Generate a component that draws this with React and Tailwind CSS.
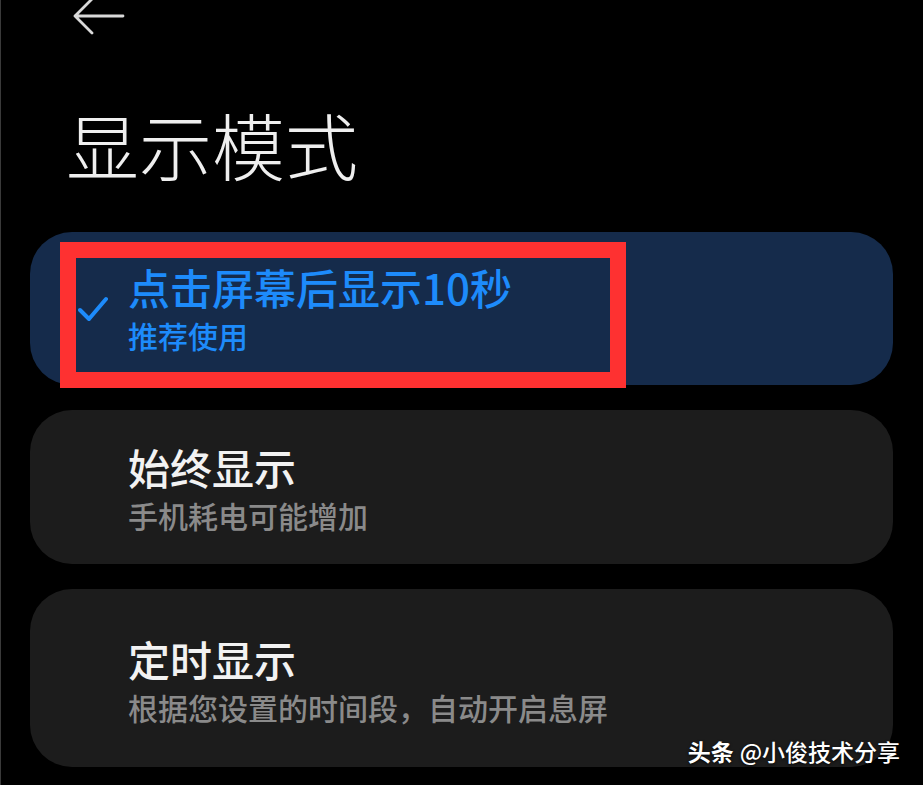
const options = [
  {
    title: "点击屏幕后显示10秒",
    desc: "推荐使用",
    selected: true,
  },
  {
    title: "始终显示",
    desc: "手机耗电可能增加",
  },
  {
    title: "定时显示",
    desc: "根据您设置的时间段，自动开启息屏",
    tall: true,
  },
];

const BackArrow = () => (
  <svg width="52" height="32" viewBox="0 0 52 32" fill="none" className="overflow-visible">
    <path
      d="M2 16 L50 16 M19 -1 L2 16 L19 33"
      stroke="#d9d9d9"
      strokeWidth="2.8"
      strokeLinecap="round"
      strokeLinejoin="round"
    />
  </svg>
);

const Check = () => (
  <svg width="30" height="26" viewBox="0 0 30 26" fill="none">
    <path
      d="M2 14 L11 23 L28 3"
      stroke="#1d8bfb"
      strokeWidth="4"
      strokeLinecap="round"
      strokeLinejoin="round"
    />
  </svg>
);

const OptionCard = ({ option }) => {
  if (option.selected) {
    return (
      <div className="relative flex h-[153px] items-center rounded-[42px] bg-[#152b4b] pl-[48px]">
        <Check />
        <div className="ml-[20px] -mt-[2px] flex flex-col">
          <span className="text-[42px] font-medium leading-[48px] text-[#1d8bfb]">
            {option.title}
          </span>
          <span className="mt-[6px] text-[30px] font-medium leading-[36px] text-[#1d8bfb]">
            {option.desc}
          </span>
        </div>
        {/* red annotation box */}
        <div className="pointer-events-none absolute left-[30px] top-[10px] h-[146px] w-[566px] border-[16px] border-[#fe3131]" />
      </div>
    );
  }

  return (
    <div
      className={
        option.tall
          ? "flex h-[178px] flex-col rounded-[42px] bg-[#1c1c1c] pl-[98px] pt-[46px]"
          : "flex h-[154px] flex-col rounded-[42px] bg-[#1c1c1c] pl-[98px] pt-[33px]"
      }
    >
      <span className="text-[42px] font-medium leading-[48px] text-[#f2f2f2]">
        {option.title}
      </span>
      <span className="mt-[6px] text-[30px] font-medium leading-[36px] text-[#8a8a8a]">
        {option.desc}
      </span>
    </div>
  );
};

const App = () => {
  return (
    <div
      className="relative h-[785px] w-[923px] overflow-hidden border-l border-[#3a3a3a] bg-black"
      style={{ fontFamily: '"Noto Sans CJK SC", "Noto Sans", sans-serif' }}
    >
      <div className="ml-[72px]">
        <BackArrow />
      </div>

      <h1 className="mt-[67px] pl-[65px] text-[73px] font-light leading-[88px] text-[#efefef]">
        显示模式
      </h1>

      <div className="mt-[45px] flex flex-col gap-[25px] pl-[29px] pr-[30px]">
        {options.map((option) => (
          <OptionCard key={option.title} option={option} />
        ))}
      </div>

      <div className="absolute right-[23px] top-[736px] flex items-center gap-[6px] text-[23px] leading-[30px] text-white [text-shadow:0_1px_3px_rgba(0,0,0,0.9)]">
        <span className="font-bold">头条</span>
        <span className="font-medium">@小俊技术分享</span>
      </div>
    </div>
  );
};

export default App;
